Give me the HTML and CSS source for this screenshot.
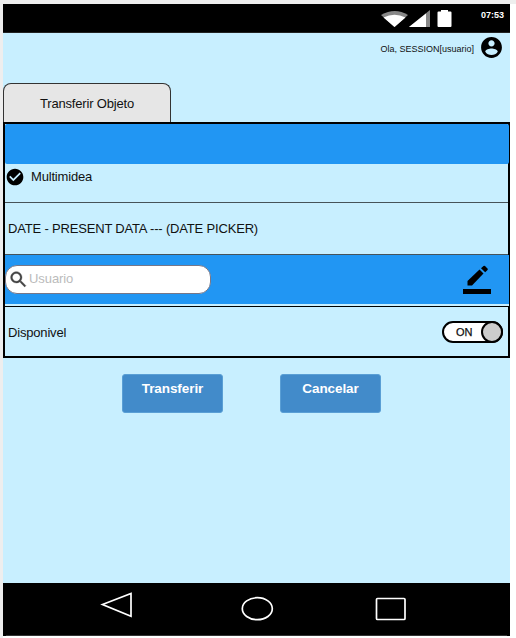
FILE: index.html
```html
<!DOCTYPE html>
<html lang="pt">
<head>
<meta charset="utf-8">
<title>Transferir Objeto</title>
<link rel="stylesheet" href="styles.css">
</head>
<body>
<div class="phone">
  <header class="status">
    <svg class="signals" width="74" height="20" viewBox="0 0 74 20">
      <path d="M0 6Q14 -2 27 6L13.500 18Z" fill="#888"/>
      <path d="M2.500 8.500Q13.500 3 24.500 8.500L13.500 18Z" fill="#fff"/>
      <path d="M28 18L49 1V18Z" fill="#888"/>
      <path d="M28 18L45 4.500V18Z" fill="#fff"/>
      <path d="M57.500 2.500H60V1H67V2.500H69.500Q70.500 2.500 70.500 3.500V17Q70.500 18 69.500 18H57.500Q56.500 18 56.500 17V3.500Q56.500 2.500 57.500 2.500Z" fill="#fff"/>
    </svg>
    <span class="clock">07:53</span>
  </header>
  <div class="user">
    <span>Ola, SESSION[usuario]</span>
    <svg width="25" height="25" viewBox="0 0 24 24"><path d="M12 2C6.480 2 2 6.480 2 12s4.480 10 10 10 10-4.480 10-10S17.520 2 12 2zm0 3c1.660 0 3 1.340 3 3s-1.340 3-3 3-3-1.340-3-3 1.340-3 3-3zm0 14.200c-2.500 0-4.710-1.280-6-3.220.03-1.990 4-3.080 6-3.080 1.990 0 5.970 1.090 6 3.080-1.290 1.940-3.500 3.220-6 3.220z"/></svg>
  </div>
  <div class="tab">Transferir Objeto</div>
  <main class="panel">
    <div class="band"></div>
    <div class="row media">
      <svg width="20" height="20" viewBox="0 0 24 24"><path d="M12 2C6.480 2 2 6.480 2 12s4.480 10 10 10 10-4.480 10-10S17.520 2 12 2zm-2 15l-5-5 1.410-1.410L10 14.170l7.590-7.590L19 8l-9 9z"/></svg>
      <span>Multimidea</span>
    </div>
    <div class="row date">DATE - PRESENT DATA --- (DATE PICKER)</div>
    <div class="row person">
      <div class="search">
        <svg width="21" height="21" viewBox="0 0 24 24"><path fill="#444" stroke="#444" stroke-width=".4" d="M15.500 14h-.79l-.28-.27C15.410 12.590 16 11.110 16 9.500 16 5.910 13.090 3 9.500 3S3 5.910 3 9.500 5.910 16 9.500 16c1.610 0 3.090-.59 4.230-1.570l.27.28v.79l5 4.990L20.490 19l-4.990-5zm-6 0C7.010 14 5 11.990 5 9.500S7.010 5 9.500 5 14 7.010 14 9.500 11.990 14 9.500 14z"/></svg>
        <span>Usuario</span>
      </div>
      <svg class="edit" width="28" height="29" viewBox="0 0 28 29"><path d="M4.500 16L16.500 4.500L20.500 8.500L9 20.500H4.500Z"/><path d="M18 3.200L20.500 1Q21.200.3 22 1L24.500 3.500Q25.200 4.300 24.500 5L22.200 7.300Z"/><path d="M0 24H28V29H0Z"/></svg>
    </div>
    <div class="row available">
      <span class="label">Disponivel</span>
      <div class="switch"><span>ON</span><i></i></div>
    </div>
  </main>
  <div class="actions">
    <div class="btn">Transferir</div>
    <div class="btn">Cancelar</div>
  </div>
  <footer class="nav">
    <svg width="507" height="53" viewBox="0 0 507 53" fill="none" stroke="#fff" stroke-width="1.700">
      <path d="M99.500 21.500L128 10.500V33.200Z"/>
      <ellipse cx="254.300" cy="25.700" rx="15" ry="11"/>
      <rect x="373.500" y="15.500" width="28.500" height="21" rx="1"/>
      <path d="M3 52.500H504" stroke="#333" stroke-width="1"/>
    </svg>
  </footer>
</div>
</body>
</html>
```

FILE: styles.css
```css
* { box-sizing: border-box; }
body {
  margin: 0;
  height: 638px;
  border: solid #eee;
  border-width: 4px 0 0 3px;
  overflow: hidden;
  background: #fff;
  font-family: "Liberation Sans", Arial, sans-serif;
  font-size: 13px;
  letter-spacing: -.18px;
  line-height: 16px;
  color: #111;
}
svg { display: block; flex: none; }
.phone {
  width: 507px;
  height: 632px;
  display: flex;
  flex-direction: column;
  background: #c8efff;
}
.status {
  height: 29px;
  flex: none;
  display: flex;
  justify-content: flex-end;
  padding: 5px 6px 0 0;
  background: #000;
  border-bottom: 1px solid #222;
}
.clock {
  width: 49px;
  text-align: right;
  color: #fff;
  font-size: 9px;
  font-weight: bold;
  letter-spacing: 0;
  line-height: 12px;
}
.user {
  height: 50px;
  flex: none;
  display: flex;
  align-items: flex-start;
  justify-content: flex-end;
  gap: 5px;
  padding: 2px 6px 0 0;
  font-size: 9px;
  letter-spacing: 0;
}
.user span { padding-top: 6px; }
.tab {
  width: 168px;
  height: 39px;
  flex: none;
  border: 1px solid #333;
  border-bottom: 0;
  border-radius: 8px 8px 0 0;
  background: #e6e6e6;
  text-align: center;
  line-height: 40px;
}
.panel {
  width: 507px;
  height: 236px;
  flex: none;
  border: 2px solid #000;
  display: grid;
  grid-template-rows: 40px 39px 52px 52px 1fr;
}
.band, .person { background: #2196f3; margin-right: -1px; }
.band { border-radius: 2px; }
.row { display: flex; align-items: center; border-bottom: 1px solid #465359; }
.row:last-child { border-bottom: 0; }
.media { align-items: flex-start; gap: 6px; padding: 3px 0 0; }
.media span { padding-top: 2px; }
.date, .available { padding-left: 3px; }
.person {
  justify-content: space-between;
  padding: 0 18px 3px 0;
  border-bottom-color: #000;
  background: linear-gradient(#2196f3 49px, #c8efff 49px);
}
.search {
  width: 206px;
  height: 29px;
  border: 1px solid #778;
  border-radius: 12px;
  display: flex;
  align-items: center;
  padding-left: 2px;
  background: #fff;
  color: #bbb;
  letter-spacing: -.08px;
}
.edit { margin-top: 1px; }
.available { justify-content: space-between; padding-right: 5px; }
.label { padding-top: 2px; }
.switch {
  width: 61px;
  height: 22px;
  border: 2px solid #000;
  border-radius: 11px;
  display: flex;
  align-items: center;
  justify-content: space-between;
  padding-left: 12px;
  background: #fff;
  font-size: 11px;
  letter-spacing: 0;
  -webkit-text-stroke: .25px #111;
}
.switch i {
  width: 22px;
  height: 22px;
  margin-right: -2px;
  border: 2px solid #000;
  border-radius: 50%;
  background: #ccc;
}
.actions {
  flex: 1;
  display: flex;
  gap: 57px;
  padding: 16px 0 0 119px;
}
.btn {
  width: 101px;
  height: 39px;
  border: 1px solid #5a9fd5;
  border-radius: 3px;
  padding-top: 6px;
  background: #428bca;
  color: #fff;
  font-size: 13.500px;
  font-weight: bold;
  letter-spacing: -.08px;
  text-align: center;
}
.nav { height: 53px; flex: none; background: #000; }
```
